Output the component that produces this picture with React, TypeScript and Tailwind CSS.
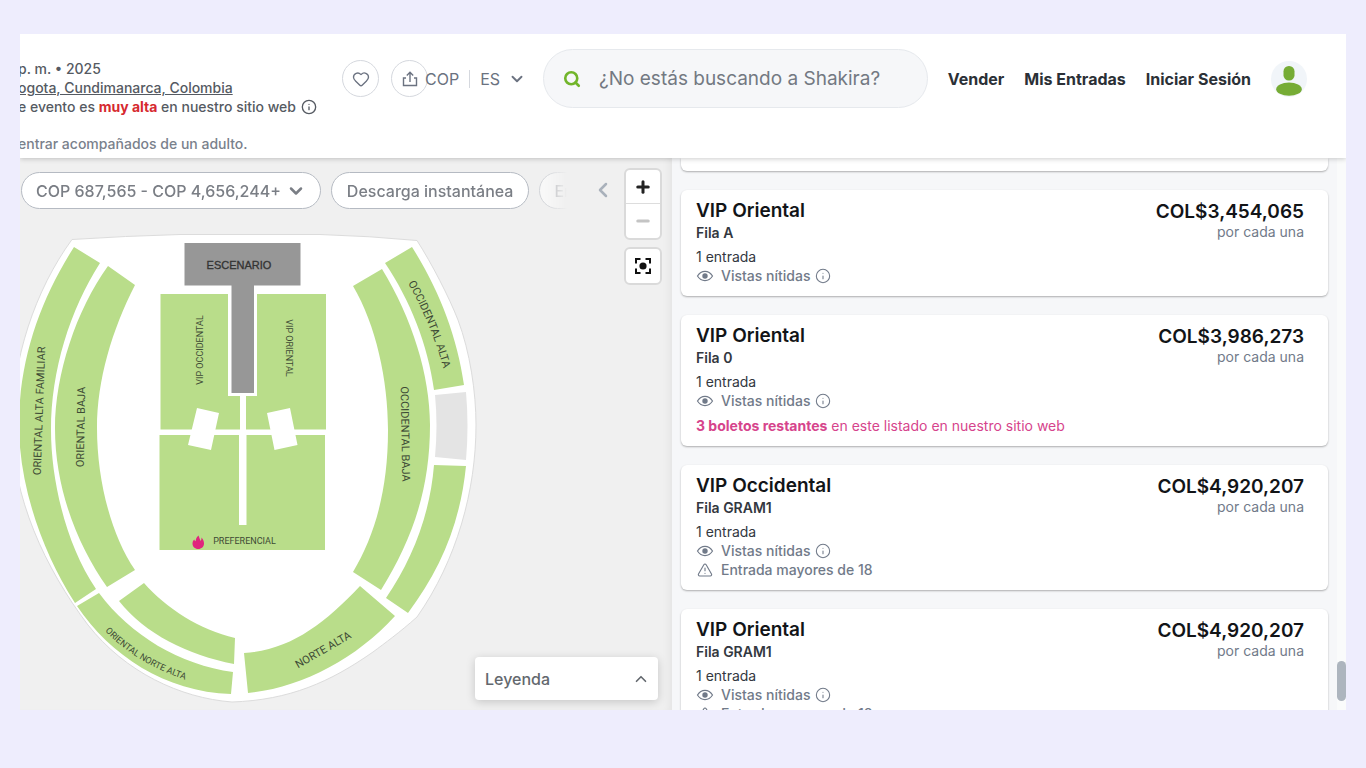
import { AlertTriangle, ChevronDown, ChevronLeft, ChevronUp, Heart, Info, Minus, Plus, Search } from "lucide-react";

type Listing = {
  section: string;
  row: string;
  price: string;
  remaining?: string;
  adultsOnly?: boolean;
};

const listings: Listing[] = [
  { section: "VIP Oriental", row: "Fila A", price: "COL$3,454,065" },
  { section: "VIP Oriental", row: "Fila 0", price: "COL$3,986,273", remaining: "3 boletos restantes" },
  { section: "VIP Occidental", row: "Fila GRAM1", price: "COL$4,920,207", adultsOnly: true },
  { section: "VIP Oriental", row: "Fila GRAM1", price: "COL$4,920,207", adultsOnly: true },
];

const standPaths = [
  // oriental alta familiar
  "M74 247C40 300 19 360 19 425C19 485 42 552 75 603L96 589C66 545 51 480 51 430C51 370 70 310 100 263Z",
  // oriental baja
  "M108 266C76 310 55 375 55 428C55 490 78 546 107 587L135 570C111 535 97 480 97 428C97 380 112 330 135 285Z",
  // oriental norte alta
  "M77 606C110 655 165 692 231 694L233 672C180 665 130 635 99 593Z",
  "M144 583C166 608 200 630 235 638L234 664C188 655 145 634 119 601Z",
  // norte alta
  "M244 653C290 650 323 625 360 586L395 616C355 660 300 688 248 693Z",
  // occidental baja
  "M353 286L382 269C412 318 430 375 430 425C430 490 412 540 381 590L353 572C375 535 388 490 388 430C388 380 376 325 353 286Z",
  // occidental alta
  "M385 263L412 247C438 288 457 335 464 385L434 390C428 345 410 300 385 263Z",
  "M434 465L466 466C460 525 440 570 408 613L386 598C412 560 430 515 434 465Z",
  // floor: vip blocks and preferencial
  "M160.500 294H228V396H240V429.500H160.500Z",
  "M257 294H326V429.500H246V396H257Z",
  "M159.500 435H239V525H246.500V435H325V550H159.500Z",
];

function ShareIcon() {
  return (
    <svg viewBox="0 0 16 16" className="size-4" fill="none" stroke="currentColor" strokeWidth="1.4">
      <path d="M8 11V1.500M4.800 4.500L8 1.300L11.200 4.500M4 7H1.500V14.500H14.500V7H12" />
    </svg>
  );
}

function EyeIcon() {
  return (
    <svg viewBox="0 0 18 16" className="h-4 w-[18px]" fill="none" stroke="currentColor" strokeWidth="1.2">
      <path d="M1.500 8C3.500 4.800 6 3.400 9 3.400S14.500 4.800 16.500 8C14.500 11.200 12 12.600 9 12.600S3.500 11.200 1.500 8Z" />
      <circle cx="9" cy="8" r="2.700" fill="currentColor" stroke="none" />
    </svg>
  );
}

function Avatar() {
  return (
    <svg viewBox="0 0 36 36" className="size-9">
      <circle cx="18" cy="18" r="18" fill="#f1f5f9" />
      <rect x="12.500" y="5" width="11" height="14.500" rx="5.300" fill="#76ac35" />
      <ellipse cx="18" cy="28.200" rx="12.800" ry="6.600" fill="#76ac35" />
    </svg>
  );
}

function SeatMap() {
  return (
    <svg
      viewBox="20 158 652 552"
      preserveAspectRatio="xMinYMin meet"
      className="absolute inset-0 h-full w-full font-[Roboto,Arial,sans-serif] text-[11px]"
      role="img"
      aria-label="Mapa de asientos"
    >
      <path
        d="M72 239.500Q125 236 180 234.500H320Q370 236 417 240.500C432 264 449 297 458 320C470 352 476 392 476 425C476 490 457 560 417 617C399 633 385 643 373 652C330 682 290 700 232 702C180 698 125 672 88 625C45 568 12 497 12 425C12 360 35 290 72 239.500Z"
        fill="#fff"
        stroke="#dcdcdc"
      />
      <g fill="#b9dd8a">
        {standPaths.map((d) => (
          <path key={d} d={d} />
        ))}
      </g>
      <path d="M435 395L466 392Q469 426 466 460L435 457Q438 425 435 395Z" fill="#e4e4e4" />
      <path d="M197 408L219 413L211 450L188 445ZM267 413L290 408L297.500 445L274.500 450Z" fill="#fff" />
      <path d="M184.500 243H300.500V285.500H254V393H231.500V285.500H184.500Z" fill="#979797" />

      <defs>
        <path id="occidental-alta" d="M408 283C424 312 436 340 445 374" />
        <path id="oriental-norte-alta" d="M105 631C130 656 155 670 192 682" />
      </defs>
      <g fill="#3d4a35" textAnchor="middle">
        <text
          x="239"
          y="268.500"
          className="font-['Liberation_Sans',Arial,sans-serif] text-[11px]"
          fill="#333"
          stroke="#333"
          strokeWidth="0.3"
        >
          ESCENARIO
        </text>
        <text transform="translate(43 411) rotate(-88)">ORIENTAL ALTA FAMILIAR</text>
        <text transform="translate(84.500 427) rotate(-89)">ORIENTAL BAJA</text>
        <text transform="translate(401.500 434) rotate(89)">OCCIDENTAL BAJA</text>
        <text transform="translate(325 653) rotate(-30)">NORTE ALTA</text>
        <g className="text-[9px]">
          <text transform="translate(203 350) rotate(-90)">VIP OCCIDENTAL</text>
          <text transform="translate(286 348) rotate(90)">VIP ORIENTAL</text>
          <text x="244.500" y="543.500">PREFERENCIAL</text>
        </g>
      </g>
      <g fill="#3d4a35">
        <text>
          <textPath href="#occidental-alta">OCCIDENTAL ALTA</textPath>
        </text>
        <text className="text-[9px]">
          <textPath href="#oriental-norte-alta">ORIENTAL NORTE ALTA</textPath>
        </text>
      </g>
      <path
        d="M198.500 535.500C199.500 538 200 539.500 200.500 541C201.300 540 201.600 539 201.500 537.500C203.300 539.500 204 541.500 204 543.500C204 546.700 201.500 549 198.200 549S192.500 546.700 192.500 543.500C192.500 541.500 193.300 540.300 194.300 539.500C194.600 540.500 195 541 195.600 541.300C195.700 539 196.700 537 198.500 535.500Z"
        fill="#e0257d"
      />
    </svg>
  );
}

function ListingCard({ listing }: { listing: Listing }) {
  return (
    <article className="flex justify-between rounded-md bg-white pt-[9px] pr-6 pb-[11px] pl-[15px] shadow-[0_1px_2px_rgba(0,0,0,0.3)]">
      <div>
        <h2 className="text-[19px] leading-6 font-semibold text-[#121417]">{listing.section}</h2>
        <p className="text-sm leading-5 font-semibold text-[#33383f]">{listing.row}</p>
        <div className="mt-1 text-sm leading-[19px] text-[#717a89]">
          <p className="text-[#33383f]">1 entrada</p>
          <p className="flex items-center font-medium">
            <EyeIcon />
            <span className="ml-[7px]">Vistas nítidas</span>
            <Info className="ml-[5px] size-4" strokeWidth={1.6} />
          </p>
          {listing.adultsOnly && (
            <p className="flex items-center font-medium">
              <AlertTriangle className="mx-px size-4" strokeWidth={1.7} />
              <span className="ml-[7px]">Entrada mayores de 18</span>
            </p>
          )}
        </div>
        {listing.remaining && (
          <p className="mt-[6px] text-sm leading-[19px] text-[#d6448c]">
            <strong className="font-bold">{listing.remaining}</strong> en este listado en nuestro sitio web
          </p>
        )}
      </div>
      <div className="pt-px text-right">
        <p className="text-[19px] leading-6 font-semibold text-[#121417]">{listing.price}</p>
        <p className="text-sm leading-4 text-[#717a89]">por cada una</p>
      </div>
    </article>
  );
}

export default function App() {
  return (
    <div className="flex h-screen flex-col bg-[#eeedfd] px-5 pt-[34px] pb-[58px] font-[Inter,sans-serif]">
      <div className="flex min-h-0 flex-1 flex-col overflow-hidden bg-white">
        <header className="relative z-10 flex h-[124px] shrink-0 items-start bg-white pr-[39px] shadow-[0_1px_5px_rgba(0,0,0,0.2)]">
          <div className="-ml-[2px] w-[324px] shrink-0 pt-[25px] text-sm leading-[19px] font-medium whitespace-nowrap text-[#555a62]">
            <p>p. m. • 2025</p>
            <a href="#recinto" className="block underline">
              ogota, Cundimanarca, Colombia
            </a>
            <p className="flex items-center">
              <span>
                e evento es <strong className="font-bold text-[#d6292f]">muy alta</strong> en nuestro sitio web
              </span>
              <Info className="ml-[5px] size-4" strokeWidth={2} />
            </p>
            <p className="mt-[18px] text-[#7a818c]">entrar acompañados de un adulto.</p>
          </div>

          <div className="flex min-w-0 flex-1 items-center pt-[15px]">
            <div className="flex shrink-0 items-center text-[#6b7280]">
              <button aria-label="Favorito" className="flex size-[37px] items-center justify-center rounded-full border border-[#d5d8de]">
                <Heart className="size-[18px]" strokeWidth={1.8} />
              </button>
              <button aria-label="Compartir" className="ml-3 flex size-[37px] items-center justify-center rounded-full border border-[#d5d8de]">
                <ShareIcon />
              </button>
              <button className="-ml-[3px] flex items-center text-base leading-5">
                <span>COP</span>
                <span className="mx-[10px] h-[18px] w-px bg-[#d5d8de]" />
                <span>ES</span>
                <ChevronDown className="ml-2 size-[18px]" strokeWidth={2.5} />
              </button>
            </div>
            <label className="ml-[17px] flex h-[59px] min-w-0 flex-1 items-center rounded-full border border-[#e6e9ed] bg-[#f6f7f9] pr-6 pl-[19px]">
              <Search className="size-[18px] shrink-0 text-[#72b52b]" strokeWidth={3.5} />
              <input
                type="text"
                aria-label="Buscar"
                placeholder="¿No estás buscando a Shakira?"
                className="ml-[18px] h-full min-w-0 flex-1 bg-transparent text-[19px] outline-none placeholder:text-[#737982]"
              />
            </label>
            <nav className="ml-5 flex shrink-0 items-center gap-5 text-base font-bold text-[#2b3036]">
              <a href="#vender">Vender</a>
              <a href="#entradas">Mis Entradas</a>
              <a href="#sesion">Iniciar Sesión</a>
              <a href="#cuenta" aria-label="Cuenta">
                <Avatar />
              </a>
            </nav>
          </div>
        </header>

        <main className="grid min-h-0 flex-1 grid-cols-[652fr_674fr]">
          <section className="relative flex flex-col justify-between overflow-hidden bg-[#f0f0f0] pr-[10px] pl-px shadow-[inset_-8px_0_10px_-6px_rgba(0,0,0,0.06)]">
            <SeatMap />
            <div className="relative flex items-start pt-[10px]">
              <div className="mt-1 flex w-0 flex-1 gap-[10px] overflow-hidden text-base font-medium text-[#7a7e85] [mask-image:linear-gradient(to_right,#000_96%,transparent)]">
                <button className="flex h-[37px] shrink-0 items-center rounded-full border border-[#b5bac2] bg-white px-[14px]">
                  COP 687,565 - COP 4,656,244+
                  <ChevronDown className="ml-[5px] size-5" strokeWidth={3} />
                </button>
                <button className="h-[37px] shrink-0 rounded-full border border-[#b5bac2] bg-white px-[15px]">
                  Descarga instantánea
                </button>
                <button className="h-[37px] shrink-0 rounded-full border border-[#b5bac2] bg-white px-[14px] opacity-50">
                  Entradas
                </button>
              </div>
              <button aria-label="Anterior" className="mt-[10px] mr-[9px] ml-6 text-[#a9b1bb]">
                <ChevronLeft className="size-6" strokeWidth={2.5} />
              </button>
              <div className="flex w-[38px] flex-col gap-[7px]">
                <div className="flex flex-col divide-y divide-[#ddd] rounded-md border-2 border-[#dadada] bg-white">
                  <button aria-label="Acercar" className="flex h-[34px] items-center justify-center text-[#222]">
                    <Plus className="size-[18px]" strokeWidth={4} />
                  </button>
                  <button aria-label="Alejar" className="flex h-[34px] items-center justify-center text-[#c4c4c4]">
                    <Minus className="size-[18px]" strokeWidth={4} />
                  </button>
                </div>
                <button aria-label="Centrar mapa" className="flex h-[38px] items-center justify-center rounded-md border-2 border-[#dadada] bg-white">
                  <svg viewBox="0 0 18 18" className="size-[18px]" fill="none" stroke="#111" strokeWidth="2">
                    <path d="M2 6.500V2H6.500M11.500 2H16V6.500M16 11.500V16H11.500M6.500 16H2V11.500" />
                    <circle cx="9" cy="9" r="3.600" fill="#111" stroke="none" />
                  </svg>
                </button>
              </div>
            </div>
            <button className="relative mr-1 mb-[10px] flex h-[43px] w-[183px] items-center justify-between self-end rounded bg-white px-[10px] text-base font-medium text-[#63686e] shadow-[0_2px_10px_rgba(0,0,0,0.18)]">
              Leyenda
              <ChevronUp className="-mr-[2px] size-[18px]" strokeWidth={2.2} />
            </button>
          </section>

          <section className="flex min-h-0 overflow-hidden bg-[#f6f7f9]">
            <div className="flex min-w-0 flex-1 flex-col gap-[19px] pr-[9px] pl-[9px]">
              <div className="h-[13px] shrink-0 rounded-b-md bg-white shadow-[0_1px_2px_rgba(0,0,0,0.3)]" />
              {listings.map((listing, index) => (
                <ListingCard key={index} listing={listing} />
              ))}
            </div>
            <div className="flex w-[9px] flex-col justify-end bg-[#fafbfb] pb-[9px]">
              <div className="h-10 rounded-full bg-[#adb5be]" />
            </div>
          </section>
        </main>
      </div>
    </div>
  );
}
